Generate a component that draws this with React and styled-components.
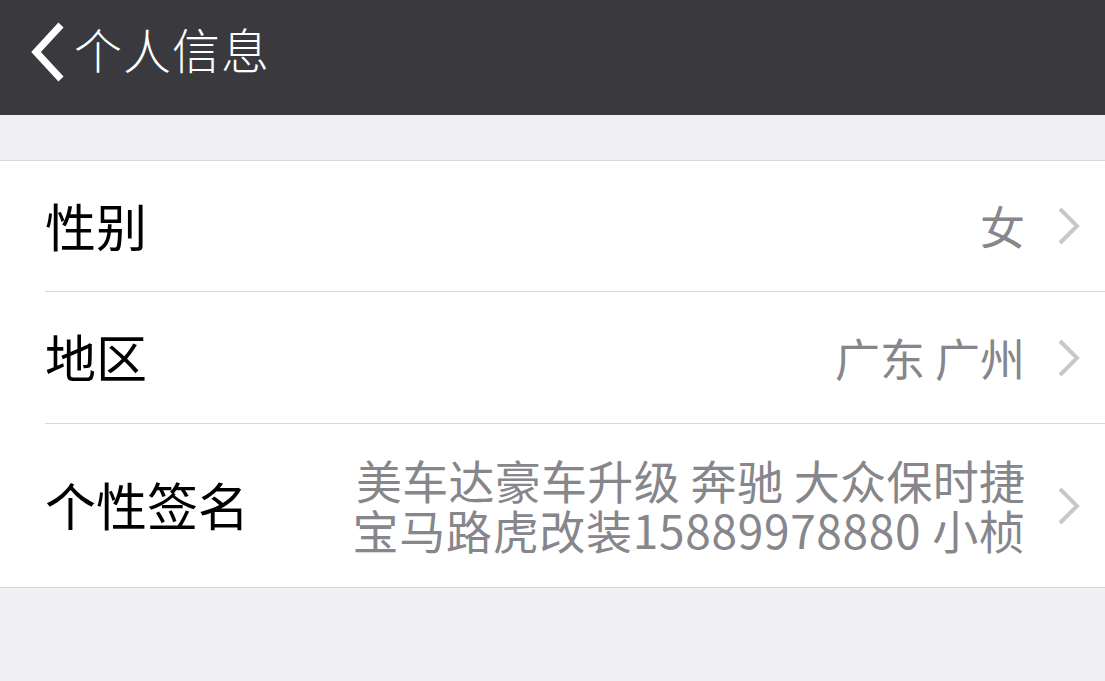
import React from 'react'
import styled, { createGlobalStyle } from 'styled-components'

const GlobalStyle = createGlobalStyle`
  html, body {
    margin: 0;
    padding: 0;
    background: #efeff4;
    font-family: "Noto Sans CJK SC", "Noto Sans", sans-serif;
  }
`

const Page = styled.div`
  width: 1105px;
  height: 681px;
  background: #efeff4;
  overflow: hidden;
`

const NavBar = styled.div`
  height: 115px;
  background: #3a393e;
  display: flex;
  align-items: center;
  padding-left: 28px;
  box-sizing: border-box;
  color: #fff;
`

const Back = styled.svg`
  width: 40px;
  height: 62px;
  margin-top: -12px;
`

const Title = styled.div`
  font-size: 48px;
  font-weight: 300;
  margin-left: 6px;
  margin-top: -20px;
  letter-spacing: 1px;
`

const Group = styled.div`
  margin-top: 45px;
  background: #fff;
  border-top: 1px solid #d9d9dc;
  border-bottom: 1px solid #d9d9dc;
`

const Row = styled.div`
  display: flex;
  align-items: center;
  height: ${p => p.$h}px;
  margin-left: 45px;
  padding-right: 24px;
  border-bottom: ${p => (p.$last ? 'none' : '1px solid #d9d9dc')};
  box-sizing: border-box;
`

const Label = styled.div`
  font-size: 51px;
  color: #000;
  flex: 0 0 auto;
  margin-top: -3px;
`

const Value = styled.div`
  flex: 1;
  text-align: right;
  font-size: 45px;
  line-height: 52px;
  color: #86868b;
  margin-right: 32px;
`

const SignLines = styled.div`
  flex: 1;
  display: flex;
  flex-direction: column;
  align-items: flex-end;
  gap: 0;
  margin-right: 32px;
  margin-top: -4px;
  color: #86868b;
  font-size: 46px;
`

const SignLine = styled.div`
  height: 50px;
  line-height: 50px;
  white-space: nowrap;
  letter-spacing: ${p => p.$ls}px;
  margin-right: ${p => -p.$ls}px;
`

const Chevron = () => (
  <svg width="24" height="40" viewBox="0 0 24 40">
    <path d="M3 3 L20 20 L3 37" fill="none" stroke="#c7c7cc" strokeWidth="4" />
  </svg>
)

export default function App() {
  return (
    <Page>
      <GlobalStyle />
      <NavBar>
        <Back viewBox="0 0 40 62">
          <path d="M33 4 L8 31 L33 58" fill="none" stroke="#fff" strokeWidth="7" />
        </Back>
        <Title>个人信息</Title>
      </NavBar>
      <Group>
        <Row $h={131}>
          <Label>性别</Label>
          <Value>女</Value>
          <Chevron />
        </Row>
        <Row $h={132}>
          <Label>地区</Label>
          <Value>广东 广州</Value>
          <Chevron />
        </Row>
        <Row $h={163} $last>
          <Label>个性签名</Label>
          <SignLines>
            <SignLine $ls={0.3}>美车达豪车升级 奔驰 大众保时捷</SignLine>
            <SignLine $ls={0.7}>宝马路虎改装15889978880 小桢</SignLine>
          </SignLines>
          <Chevron />
        </Row>
      </Group>
    </Page>
  )
}
